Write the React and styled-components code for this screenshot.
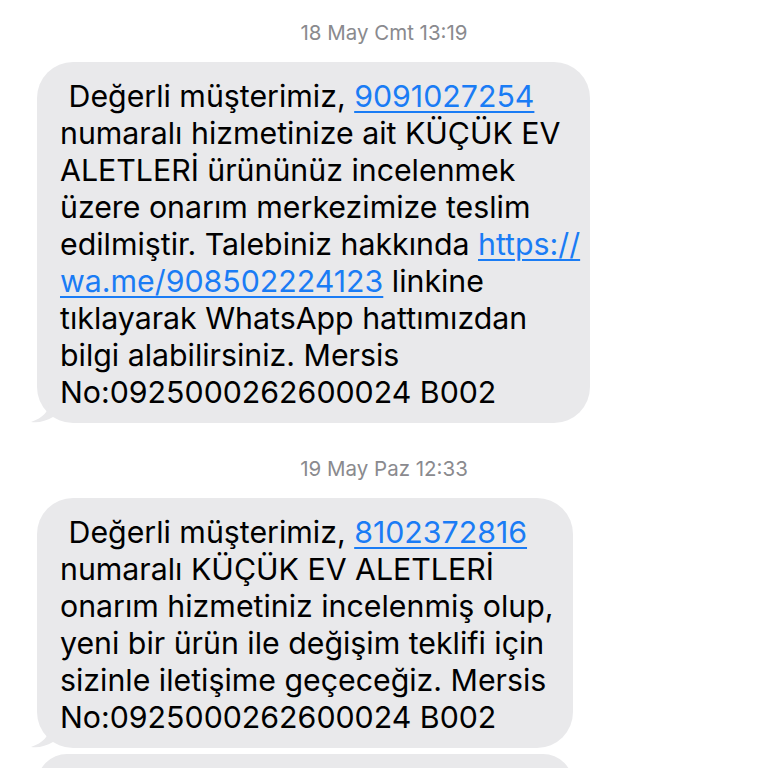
import React from 'react'
import styled, { createGlobalStyle } from 'styled-components'

const Global = createGlobalStyle`
  html, body { margin: 0; padding: 0; background: #ffffff; }
  body { font-family: Inter, "Liberation Sans", sans-serif; overflow: hidden; }
`

const messages = [
  {
    time: '18 May Cmt 13:19',
    width: 553,
    lines: [
      [' Değerli müşterimiz, ', { link: '9091027254' }],
      ['numaralı hizmetinize ait KÜÇÜK EV'],
      ['ALETLERİ ürününüz incelenmek'],
      ['üzere onarım merkezimize teslim'],
      ['edilmiştir. Talebiniz hakkında ', { link: 'https://' }],
      [{ link: 'wa.me/908502224123' }, ' linkine'],
      ['tıklayarak WhatsApp hattımızdan'],
      ['bilgi alabilirsiniz. Mersis'],
      ['No:0925000262600024 B002'],
    ],
  },
  {
    time: '19 May Paz 12:33',
    width: 536,
    lines: [
      [' Değerli müşterimiz, ', { link: '8102372816' }],
      ['numaralı KÜÇÜK EV ALETLERİ'],
      ['onarım hizmetiniz incelenmiş olup,'],
      ['yeni bir ürün ile değişim teklifi için'],
      ['sizinle iletişime geçeceğiz. Mersis'],
      ['No:0925000262600024 B002'],
    ],
  },
]

const App = () => {
  return (
    <>
      <Global />
      <Thread>
        {messages.map((m, i) => (
          <Group key={i}>
            <Stamp>{m.time}</Stamp>
            <Bubble $width={m.width}>
              {m.lines.map((line, j) => (
                <Line key={j}>
                  {line.map((part, k) =>
                    typeof part === 'string' ? part : <Link key={k}>{part.link}</Link>
                  )}
                </Line>
              ))}
              <Tail viewBox="0 0 24 20">
                <path d="M20 0 C20 8 14 15 2 19 C10 20 17 18 24 14 L24 0 Z" fill="#e9e9eb" />
              </Tail>
            </Bubble>
          </Group>
        ))}
        <Bubble $width={536} $peek />
      </Thread>
    </>
  )
}

// ///// Style ////////
const Thread = styled.div`
  width: 768px;
  height: 768px;
  overflow: hidden;
  display: flex;
  flex-direction: column;
  padding-top: 21px;
  box-sizing: border-box;
`
const Group = styled.div`
  display: flex;
  flex-direction: column;
  & + & { margin-top: 34px; }
`
const Stamp = styled.div`
  text-align: center;
  color: #8a8a8e;
  font-size: 20.5px;
  line-height: 24px;
  font-weight: 400;
  margin-bottom: 17px;
`
const Bubble = styled.div`
  position: relative;
  width: ${p => p.$width}px;
  box-sizing: border-box;
  margin-left: 37px;
  background: #e9e9eb;
  border-radius: 36px;
  padding: 16px 18px 12px 23px;
  ${p => p.$peek && `
    height: 60px;
    flex-shrink: 0;
    margin-top: 6px;
  `}
`
const Line = styled.div`
  font-size: 30.3px;
  line-height: 37px;
  color: #000;
  white-space: pre;
`
const Link = styled.span`
  color: #1a7cf5;
  text-decoration: underline;
  text-decoration-thickness: 1.5px;
  text-underline-offset: 4px;
`
const Tail = styled.svg`
  position: absolute;
  left: -8px;
  bottom: 0;
  width: 24px;
  height: 20px;
`

export default App
